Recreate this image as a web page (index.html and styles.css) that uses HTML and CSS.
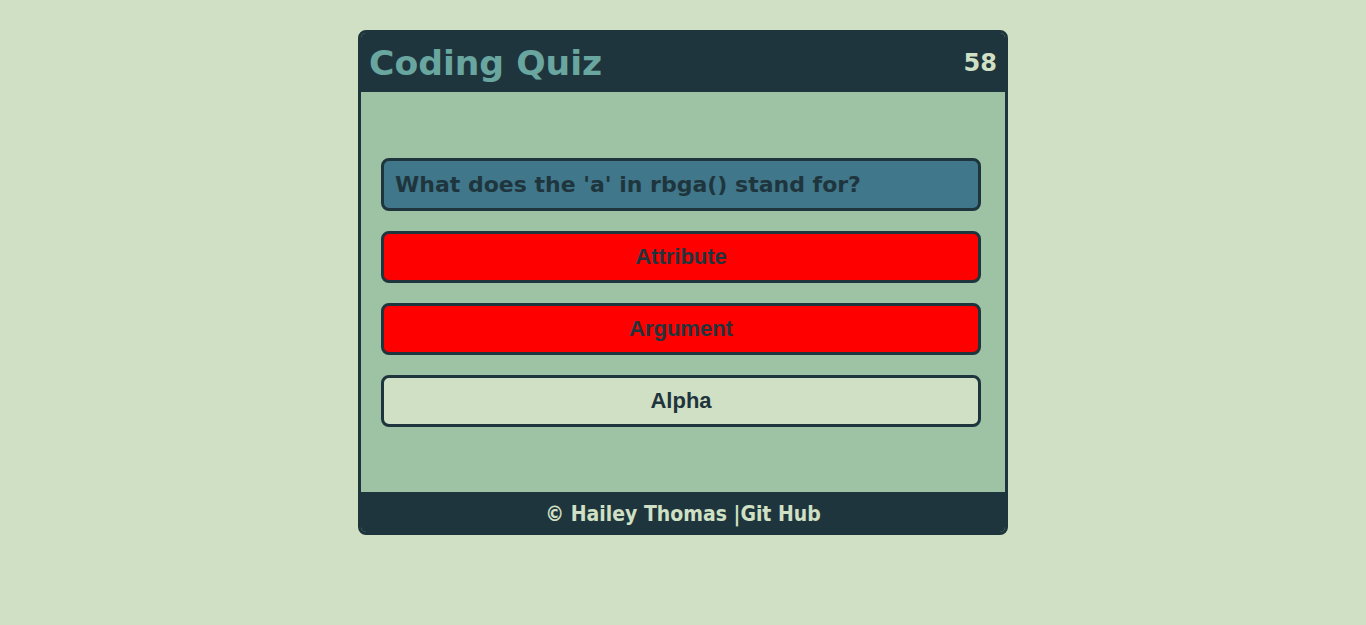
FILE: index.html
```html
<!DOCTYPE html>
<html lang="en">
<head>
<meta charset="utf-8">
<title>Coding Quiz</title>
<link rel="stylesheet" href="styles.css">
</head>
<body>
<div class="quiz">
  <header class="quiz-header">
    <h1 class="title">Coding Quiz</h1>
    <span class="timer">58</span>
  </header>
  <main class="quiz-body">
    <div class="question">What does the 'a' in rbga() stand for?</div>
    <button class="answer wrong">Attribute</button>
    <button class="answer wrong">Argument</button>
    <button class="answer">Alpha</button>
  </main>
  <footer class="quiz-footer">© Hailey Thomas |Git Hub</footer>
</div>
</body>
</html>
```
FILE: styles.css
```css
html, body {
  margin: 0;
  padding: 0;
}
body {
  background: #d0e0c4;
  font-family: "DejaVu Sans", Verdana, sans-serif;
}
.quiz {
  width: 650px;
  margin: 30px auto 0;
  border: 3px solid #1f353d;
  border-radius: 8px;
  background: #9dc2a4;
  box-sizing: border-box;
  overflow: hidden;
}
.quiz-header {
  background: #1f353d;
  height: 59px;
  display: flex;
  justify-content: space-between;
  align-items: center;
  padding: 0 8px;
}
.title {
  margin: 0;
  font-size: 34.6px;
  font-weight: bold;
  color: #6aa6a0;
}
.timer {
  font-size: 24px;
  font-weight: bold;
  color: #d0e0c4;
}
.quiz-body {
  height: 400px;
  box-sizing: border-box;
  padding: 66px 20px 0;
  display: flex;
  flex-direction: column;
  gap: 20px;
}
.question {
  width: 600px;
  height: 53px;
  box-sizing: border-box;
  border: 3px solid #1f353d;
  border-radius: 8px;
  background: #40778a;
  color: #1f353d;
  font-size: 22px;
  font-weight: bold;
  display: flex;
  align-items: center;
  padding: 0 11px 0;
}
.answer {
  width: 600px;
  height: 52px;
  box-sizing: border-box;
  border: 3px solid #1f353d;
  border-radius: 8px;
  background: #d0e0c4;
  color: #1f353d;
  font-family: "Liberation Sans", Arial, sans-serif;
  font-size: 22px;
  font-weight: bold;
  padding: 0;
  cursor: pointer;
}
.answer.wrong {
  background: #ff0000;
}
.quiz-footer {
  background: #1f353d;
  height: 40px;
  display: flex;
  justify-content: center;
  align-items: center;
  padding-top: 3px;
  box-sizing: border-box;
  color: #d0e0c4;
  font-family: "DejaVu Sans Condensed", "DejaVu Sans", sans-serif;
  font-size: 21px;
  font-weight: bold;
}
```
